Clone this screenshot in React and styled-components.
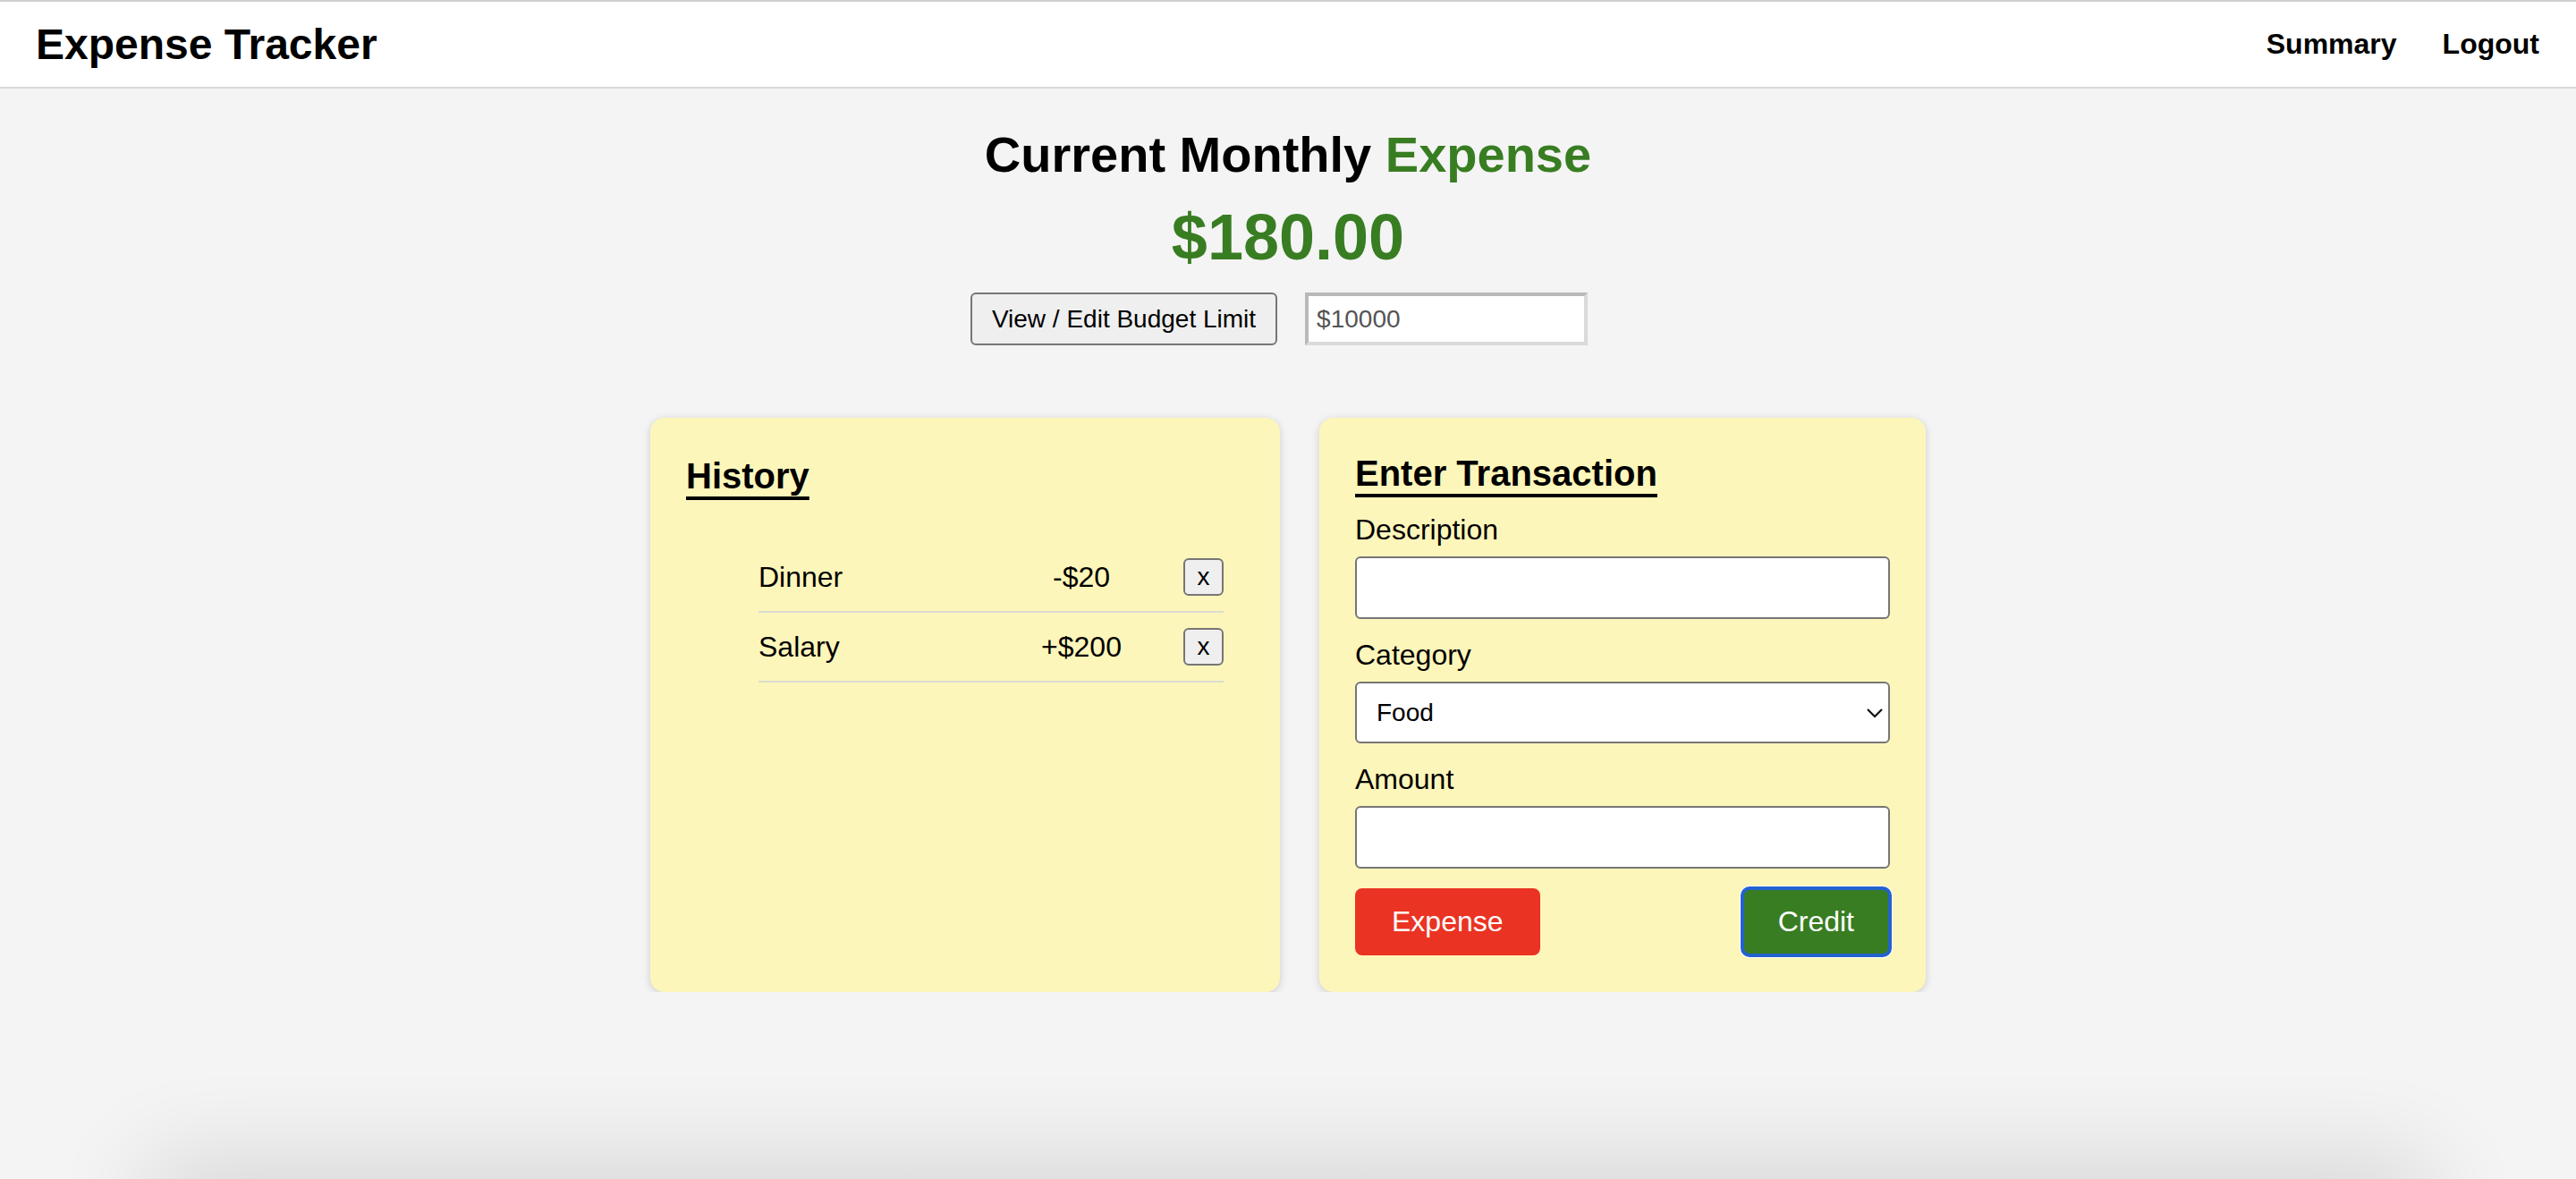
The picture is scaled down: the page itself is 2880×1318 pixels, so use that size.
import React from 'react';
import styled, { createGlobalStyle } from 'styled-components';

const GlobalStyle = createGlobalStyle`
  * {
    box-sizing: border-box;
  }
  body {
    margin: 0;
    background: #f4f4f4;
    font-family: "Liberation Sans", Arial, sans-serif;
    color: #000;
  }
`;

const Nav = styled.nav`
  display: flex;
  justify-content: space-between;
  align-items: center;
  height: 99px;
  padding: 0 41px 0 40px;
  background: #fff;
  border-top: 2px solid #cecece;
  border-bottom: 2px solid #d9d9d9;
`;

const Brand = styled.h1`
  margin: 0;
  font-size: 48px;
  font-weight: 700;
`;

const NavMenu = styled.div`
  display: flex;
  gap: 51px;
`;

const NavLink = styled.a`
  font-size: 32px;
  font-weight: 700;
  color: #000;
  text-decoration: none;
  cursor: pointer;
`;

const Main = styled.main`
  display: flex;
  flex-direction: column;
  align-items: center;
  padding-top: 42px;
`;

const Title = styled.h2`
  margin: 0;
  font-size: 56px;
  line-height: 64px;
  font-weight: 700;
`;

const Green = styled.span`
  color: #387d22;
`;

const Total = styled.div`
  margin-top: 19px;
  font-size: 72px;
  line-height: 83px;
  font-weight: 700;
  color: #387d22;
`;

const BudgetRow = styled.div`
  display: flex;
  align-items: center;
  gap: 31px;
  margin-top: 20px;
  padding-right: 20px;
`;

const GreyButton = styled.button`
  height: ${p => p.$h || 59}px;
  width: ${p => (p.$w ? `${p.$w}px` : 'auto')};
  padding: ${p => (p.$w ? '0' : '0 22px')};
  font-family: inherit;
  font-size: 28px;
  color: #000;
  background: #efefef;
  border: 2px solid #767676;
  border-radius: 6px;
  cursor: pointer;
`;

const BudgetInput = styled.input`
  width: 316px;
  height: 59px;
  padding: 0 9px;
  font-family: inherit;
  font-size: 28px;
  color: #545454;
  background: #fff;
  border-width: 4px;
  border-style: solid;
  border-color: #b9b9b9 #dadada #dadada #b9b9b9;
  outline: none;
`;

const Cards = styled.section`
  display: flex;
  align-items: stretch;
  gap: 44px;
  margin-top: 81px;
`;

const Card = styled.div`
  width: ${p => p.$w}px;
  padding: ${p => p.$pt || 42}px 40px 41px;
  background: #fdf6ba;
  border-radius: 16px;
  box-shadow: 0 2px 10px rgba(0, 0, 0, 0.16);
`;

const CardTitle = styled.h3`
  display: inline-block;
  margin: 0;
  font-size: 40px;
  line-height: 46px;
  font-weight: 700;
  text-decoration: underline;
  text-decoration-thickness: 4px;
  text-underline-offset: 9px;
  text-decoration-skip-ink: none;
`;

const List = styled.ul`
  list-style: none;
  margin: 52px 0 0;
  padding: 0 23px 0 81px;
`;

const Row = styled.li`
  display: grid;
  grid-template-columns: 1fr 160px 45px;
  column-gap: 34px;
  align-items: center;
  padding: 17px 0;
  border-bottom: 2px solid #dcdcd2;
  font-size: 32px;
  line-height: 37px;
`;

const Amount = styled.span`
  text-align: center;
`;

const Field = styled.div`
  margin-top: 22px;
`;

const Label = styled.label`
  display: block;
  margin-bottom: 11px;
  font-size: 32px;
  line-height: 37px;
`;

const TextInput = styled.input`
  display: block;
  width: 100%;
  height: 70px;
  padding: 0 20px;
  font-family: inherit;
  font-size: 28px;
  background: #fff;
  border: 2px solid #767676;
  border-radius: 6px;
  outline: none;
`;

const SelectWrap = styled.div`
  position: relative;
`;

const Select = styled.select`
  display: block;
  width: 100%;
  height: 69px;
  padding: 0 22px;
  font-family: inherit;
  font-size: 28px;
  color: #000;
  background: #fff;
  border: 2px solid #767676;
  border-radius: 6px;
  appearance: none;
  outline: none;
`;

const Chevron = styled.svg`
  position: absolute;
  right: 7px;
  top: 50%;
  transform: translateY(-50%);
  pointer-events: none;
`;

const ButtonRow = styled.div`
  display: flex;
  justify-content: space-between;
  margin-top: 22px;
`;

const ActionButton = styled.button`
  height: 75px;
  padding: 0 ${p => p.$px || 41}px;
  font-family: inherit;
  font-size: 32px;
  color: #fff;
  background: ${p => p.$bg};
  border: none;
  border-radius: 8px;
  cursor: pointer;
  outline: ${p => (p.$focused ? '4px solid #2462cf' : 'none')};
  outline-offset: -2px;
  box-shadow: ${p => (p.$focused ? '0 0 0 3px #fff' : 'none')};
`;

const Shade = styled.div`
  position: fixed;
  left: 180px;
  right: 180px;
  bottom: -60px;
  height: 60px;
  box-shadow: 0 0 110px 16px rgba(0, 0, 0, 0.14);
  pointer-events: none;
`;

const history = [
  { id: 1, name: 'Dinner', amount: '-$20' },
  { id: 2, name: 'Salary', amount: '+$200' },
];

export default function App() {
  return (
    <>
      <GlobalStyle />
      <Nav>
        <Brand>Expense Tracker</Brand>
        <NavMenu>
          <NavLink>Summary</NavLink>
          <NavLink>Logout</NavLink>
        </NavMenu>
      </Nav>
      <Main>
        <Title>
          Current Monthly <Green>Expense</Green>
        </Title>
        <Total>$180.00</Total>
        <BudgetRow>
          <GreyButton>View / Edit Budget Limit</GreyButton>
          <BudgetInput defaultValue="$10000" />
        </BudgetRow>
        <Cards>
          <Card $w={704}>
            <CardTitle>History</CardTitle>
            <List>
              {history.map(item => (
                <Row key={item.id}>
                  <span>{item.name}</span>
                  <Amount>{item.amount}</Amount>
                  <GreyButton $w={45} $h={42}>x</GreyButton>
                </Row>
              ))}
            </List>
          </Card>
          <Card $w={678} $pt={39}>
            <CardTitle>Enter Transaction</CardTitle>
            <Field>
              <Label>Description</Label>
              <TextInput />
            </Field>
            <Field>
              <Label>Category</Label>
              <SelectWrap>
                <Select defaultValue="Food">
                  <option>Food</option>
                  <option>Travel</option>
                  <option>Shopping</option>
                  <option>Other</option>
                </Select>
                <Chevron width="20" height="12" viewBox="0 0 20 12">
                  <path d="M2 2 L10 10 L18 2" fill="none" stroke="#111" strokeWidth="2.2" />
                </Chevron>
              </SelectWrap>
            </Field>
            <Field>
              <Label>Amount</Label>
              <TextInput />
            </Field>
            <ButtonRow>
              <ActionButton $bg="#ea3323">Expense</ActionButton>
              <ActionButton $bg="#387d22" $px={40} $focused>Credit</ActionButton>
            </ButtonRow>
          </Card>
        </Cards>
      </Main>
      <Shade />
    </>
  );
}
